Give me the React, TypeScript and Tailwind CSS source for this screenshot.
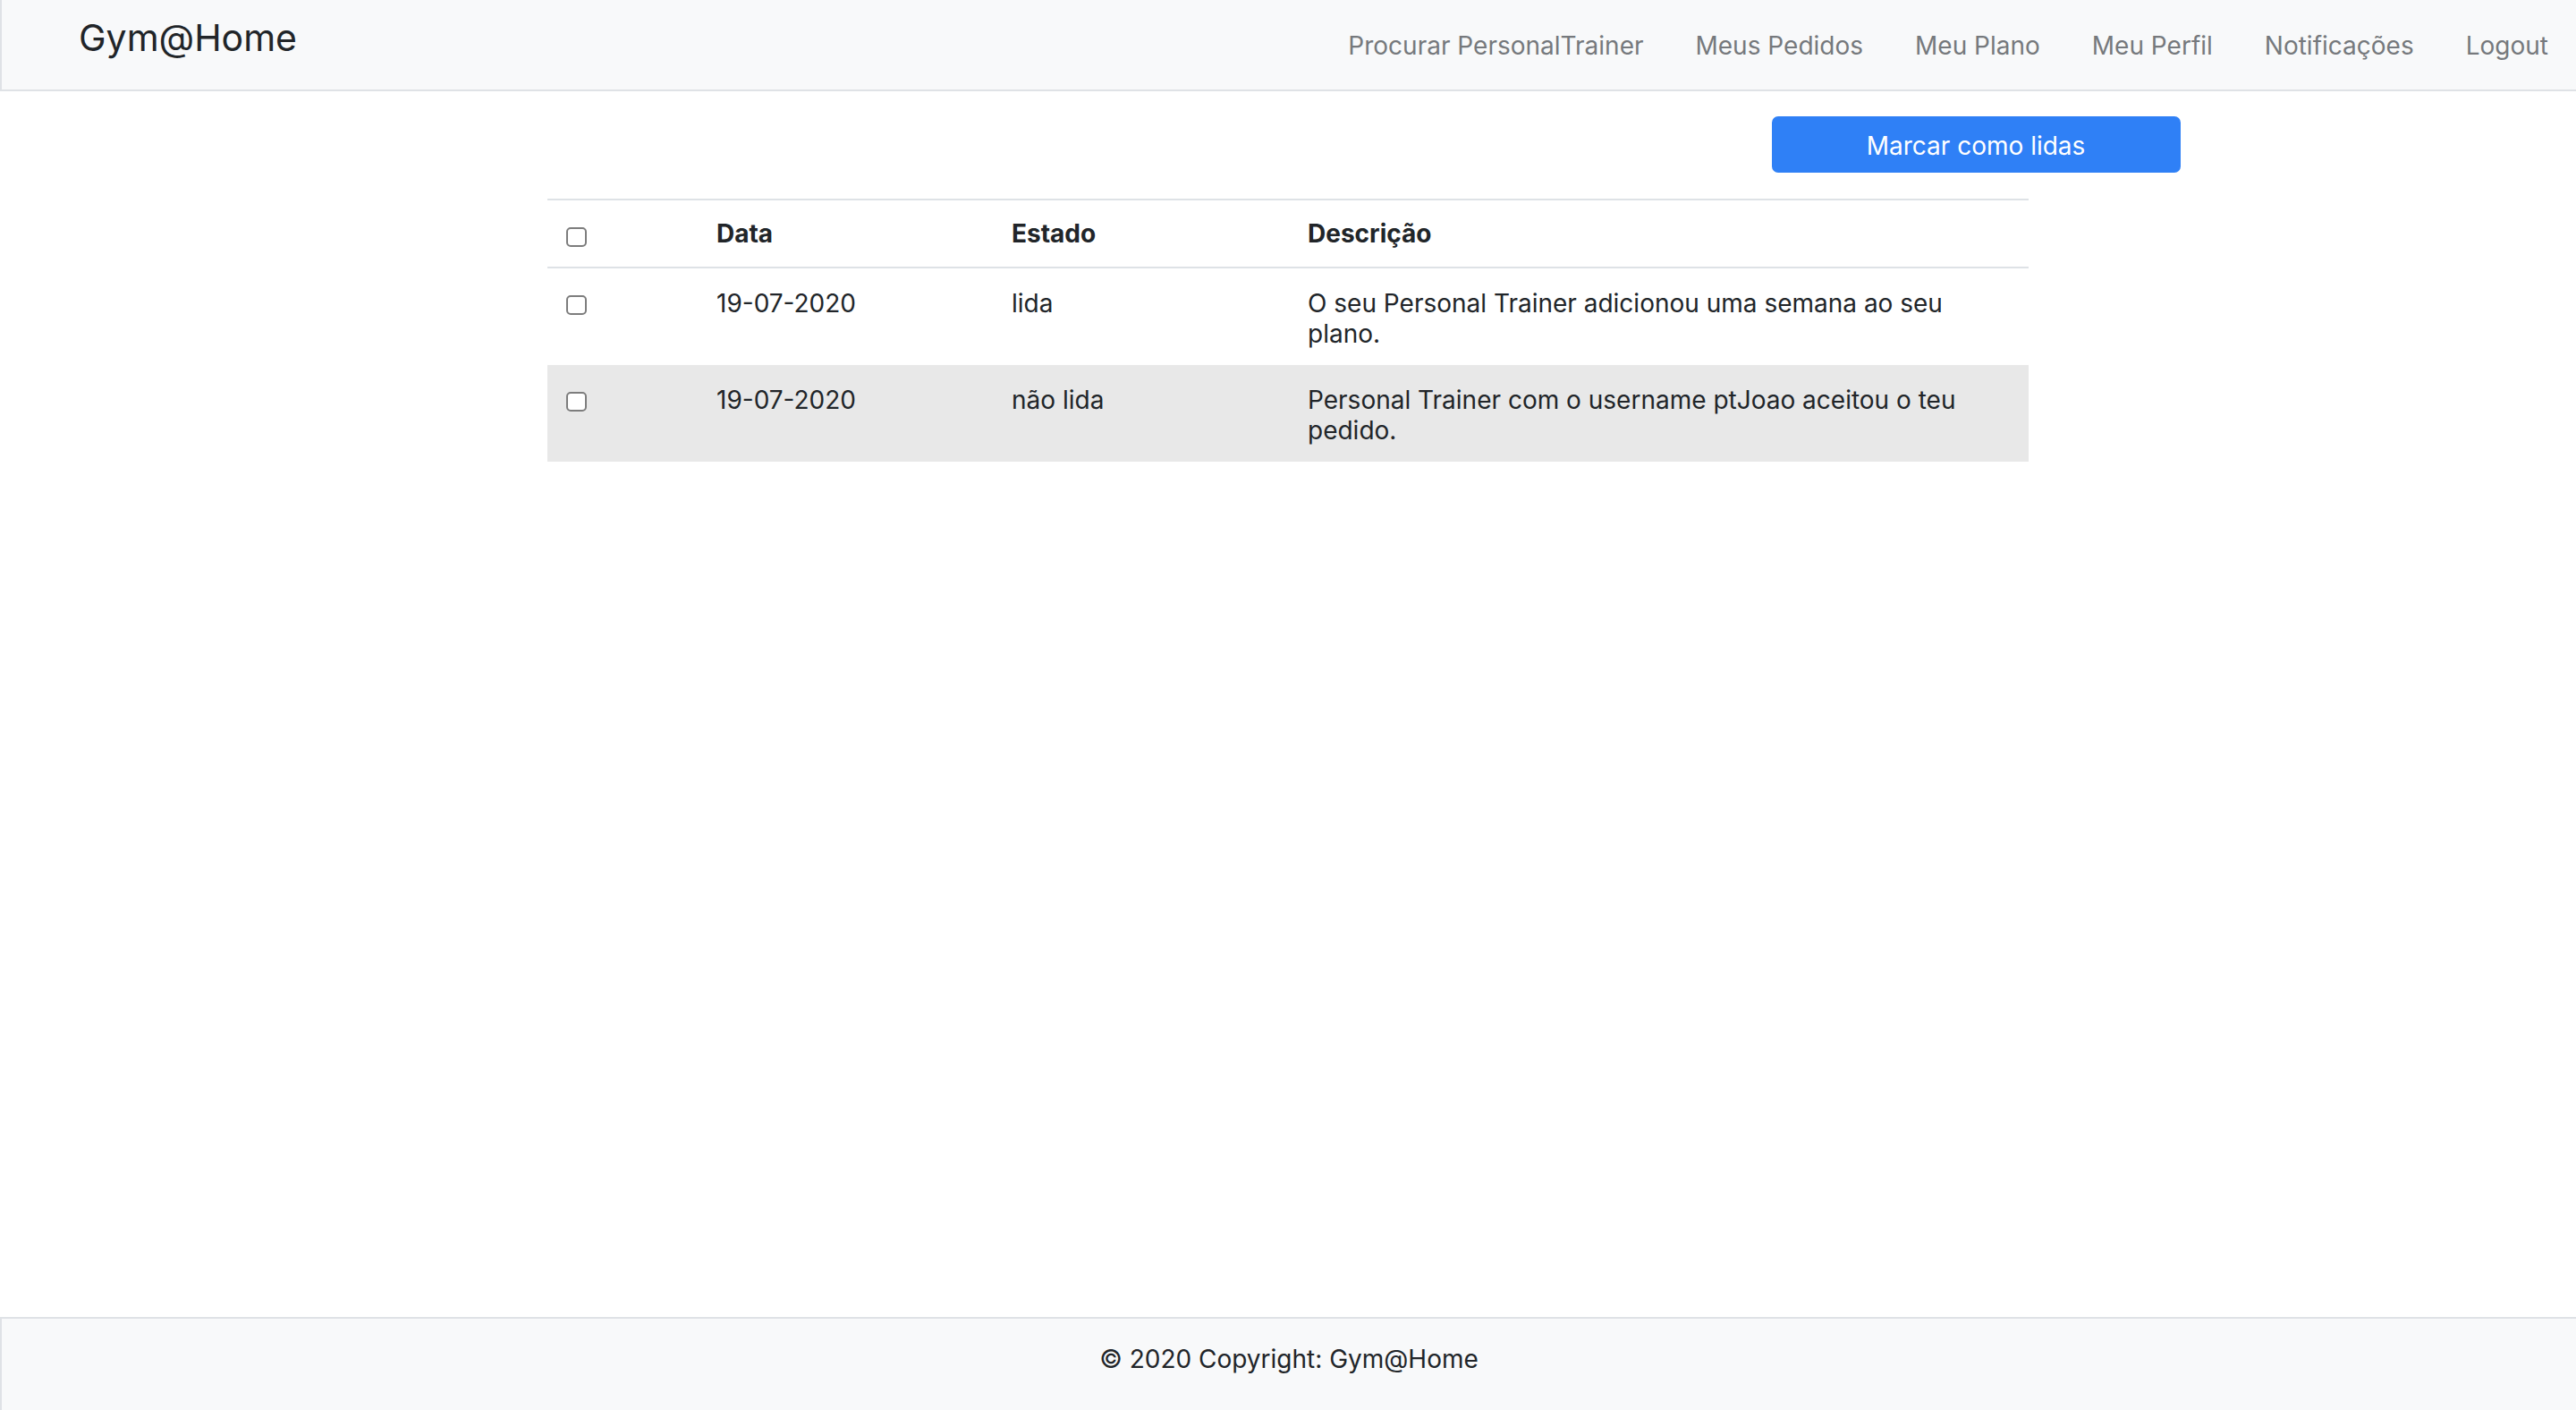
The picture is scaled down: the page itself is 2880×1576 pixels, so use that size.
import React from "react";

const links = [
  "Procurar PersonalTrainer",
  "Meus Pedidos",
  "Meu Plano",
  "Meu Perfil",
  "Notificações",
  "Logout",
];

const notifications = [
  {
    id: 1,
    date: "19-07-2020",
    state: "lida",
    text: "O seu Personal Trainer adicionou uma semana ao seu plano.",
  },
  {
    id: 2,
    date: "19-07-2020",
    state: "não lida",
    text: "Personal Trainer com o username ptJoao aceitou o teu pedido.",
  },
];

function Check() {
  return (
    <input
      type="checkbox"
      className="block appearance-none w-[23px] h-[22px] rounded-[5px] border-2 border-[#7d7d7d] bg-white"
    />
  );
}

export default function App() {
  return (
    <div
      className="min-h-screen flex flex-col bg-white text-[#212529]"
      style={{ fontFamily: "Inter, 'Noto Sans', sans-serif" }}
    >
      {/* Navbar */}
      <nav className="h-[102px] flex items-center justify-between bg-[#f8f9fa] border-l-2 border-b-2 border-[#dfe2e6]">
        <a className="pl-[86px] mb-[14px] text-[41px] leading-[1.2] text-[#212529]">Gym@Home</a>
        <ul className="flex items-center pr-[2px] mt-[4px]">
          {links.map((l) => (
            <li key={l}>
              <a className="block px-[29px] text-[28px] leading-[1.2] text-[#76797d]">{l}</a>
            </li>
          ))}
        </ul>
      </nav>

      {/* Content */}
      <main className="w-[1995px] mx-auto">
        <div className="flex justify-end mt-[28px]">
          <button className="w-[457px] h-[63px] pt-[5px] rounded-[7px] bg-[#2f80f6] text-white text-[28px] leading-[1.2]">
            Marcar como lidas
          </button>
        </div>

        <table className="mt-[29px] w-[1656px] mx-auto table-fixed border-collapse text-[28px] leading-[34px]">
          <thead>
            <tr className="border-t-2 border-b-2 border-[#dee2e6]">
              <th className="w-[168px] px-[21px] pt-[30px] pb-0 text-left align-top">
                <Check />
              </th>
              <th className="w-[330px] px-[21px] py-[20px] text-left font-bold">Data</th>
              <th className="w-[331px] px-[21px] py-[20px] text-left font-bold">Estado</th>
              <th className="px-[21px] py-[20px] text-left font-bold">Descrição</th>
            </tr>
          </thead>
          <tbody>
            {notifications.map((n, i) => (
              <tr key={n.id} className={i % 2 === 1 ? "bg-[#e8e8e8]" : "bg-white"}>
                <td className="px-[21px] pt-[22px] pb-[18px] align-top">
                  <div className="pt-[8px]">
                    <Check />
                  </div>
                </td>
                <td className="px-[21px] pt-[22px] pb-[18px] align-top">{n.date}</td>
                <td className="px-[21px] pt-[22px] pb-[18px] align-top">{n.state}</td>
                <td className="px-[21px] pt-[22px] pb-[18px] align-top">{n.text}</td>
              </tr>
            ))}
          </tbody>
        </table>
      </main>

      {/* Footer */}
      <footer className="mt-auto h-[104px] flex items-center justify-center bg-[#f8f9fa] border-t-2 border-l-2 border-[#dfe2e6]">
        <span className="mb-[10px] text-[28px] leading-[1.2]">© 2020 Copyright: Gym@Home</span>
      </footer>
    </div>
  );
}
